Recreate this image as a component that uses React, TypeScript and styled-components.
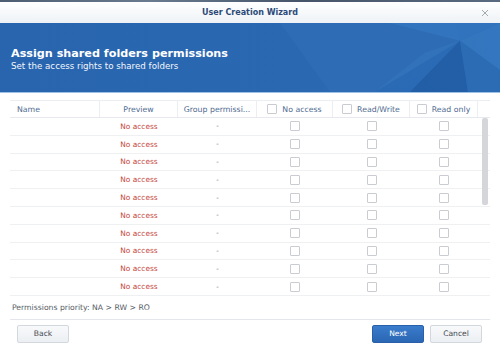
import { createGlobalStyle, styled } from "styled-components";

const GlobalStyle = createGlobalStyle`
  html, body {
    margin: 0;
    padding: 0;
    background: #ffffff;
  }
  body {
    font-family: "DejaVu Sans", "Liberation Sans", sans-serif;
  }
  * {
    box-sizing: border-box;
  }
`;

const ROWS = 10;
const COLUMNS = "90px 78px 79px 76px 77px 68px 12px";

const App = () => {
  return (
    <Window>
      <GlobalStyle />
      <TopStrip />
      <TitleBar>
        <span />
        <Title>User Creation Wizard</Title>
        <Close aria-label="close">
          <svg width="8" height="8" viewBox="0 0 8 8">
            <path d="M1 1 L7 7 M7 1 L1 7" stroke="#a3a9b0" strokeWidth="1" />
          </svg>
        </Close>
      </TitleBar>
      <Banner>
        <Facets viewBox="0 0 500 70" preserveAspectRatio="none">
          <polygon points="280,0 455,0 460,18 375,70 330,70" fill="#3270b8" opacity="0.45" />
          <polygon points="390,0 500,0 460,18" fill="#3577c0" opacity="0.7" />
          <polygon points="460,18 500,0 500,48" fill="#3a7dc5" opacity="0.6" />
          <polygon points="460,18 410,70 468,70" fill="#1f5aa0" opacity="0.7" />
          <polygon points="460,18 468,70 500,70 500,48" fill="#2c6cb5" />
          <polygon points="425,30 460,18 375,70" fill="#3a7cc4" opacity="0.35" />
        </Facets>
        <BannerTitle>Assign shared folders permissions</BannerTitle>
        <BannerSubtitle>Set the access rights to shared folders</BannerSubtitle>
      </Banner>

      <Content>
        <Table>
          <HeaderRow>
            <HeaderCell $align="left">Name</HeaderCell>
            <HeaderCell>Preview</HeaderCell>
            <HeaderCell>Group permissi...</HeaderCell>
            <HeaderCell>
              <Box />
              No access
            </HeaderCell>
            <HeaderCell>
              <Box />
              Read/Write
            </HeaderCell>
            <HeaderCell>
              <Box />
              Read only
            </HeaderCell>
            <HeaderCell $last />
          </HeaderRow>
          <Body>
            {Array.from({ length: ROWS }).map((_, i) => (
              <Row key={i}>
                <Cell />
                <Cell>
                  <Denied>No access</Denied>
                </Cell>
                <Cell>
                  <Dash>-</Dash>
                </Cell>
                <Cell>
                  <Box />
                </Cell>
                <Cell>
                  <Box />
                </Cell>
                <Cell>
                  <Box />
                </Cell>
                <Cell />
              </Row>
            ))}
            <Thumb />
          </Body>
        </Table>
        <Priority>Permissions priority: NA &gt; RW &gt; RO</Priority>
      </Content>

      <Footer>
        <Button>Back</Button>
        <Spacer />
        <Button $primary>Next</Button>
        <Button>Cancel</Button>
      </Footer>
    </Window>
  );
};

export default App;

const Window = styled.div`
  width: 500px;
  height: 346px;
  display: flex;
  flex-direction: column;
  background: #ffffff;
  overflow: hidden;
`;
const TopStrip = styled.div`
  height: 2px;
  background: linear-gradient(90deg, #4d5d72, #6a7b90 30%, #465569 60%, #5a6a80);
`;
const TitleBar = styled.div`
  height: 21px;
  display: grid;
  grid-template-columns: 1fr auto 1fr;
  align-items: center;
  background: linear-gradient(#ffffff, #eef2f6);
`;
const Title = styled.div`
  font-size: 8px;
  font-weight: bold;
  color: #2c4a78;
`;
const Close = styled.div`
  justify-self: end;
  margin-right: 11px;
  display: flex;
  align-items: center;
`;
const Banner = styled.div`
  position: relative;
  height: 70px;
  padding: 2px 11px 0;
  display: flex;
  flex-direction: column;
  justify-content: center;
  background: linear-gradient(90deg, #2965af, #2a68b2 60%, #2b6cb6);
  border-bottom: 1px solid #9dc0e4;
  overflow: hidden;
`;
const Facets = styled.svg`
  position: absolute;
  inset: 0;
  width: 100%;
  height: 100%;
`;
const BannerTitle = styled.div`
  position: relative;
  font-size: 11.2px;
  font-weight: bold;
  color: #ffffff;
  line-height: 15px;
`;
const BannerSubtitle = styled.div`
  position: relative;
  font-size: 8.7px;
  color: #f2f6fb;
  line-height: 11px;
`;
const Content = styled.div`
  padding: 7px 10px 0;
  display: flex;
  flex-direction: column;
`;
const Table = styled.div`
  display: flex;
  flex-direction: column;
`;
const HeaderRow = styled.div`
  display: grid;
  grid-template-columns: ${COLUMNS};
  height: 18px;
  border-top: 1px solid #eceff2;
  border-bottom: 1px solid #e6e9ed;
`;
const HeaderCell = styled.div<{ $align?: "left"; $last?: boolean }>`
  display: flex;
  align-items: center;
  justify-content: ${p => (p.$align === "left" ? "flex-start" : "center")};
  gap: 5px;
  padding-left: ${p => (p.$align === "left" ? "7px" : "0")};
  border-right: ${p => (p.$last ? "none" : "1px solid #eceff2")};
  font-size: 7.8px;
  color: #4f6b90;
  white-space: nowrap;
  overflow: hidden;
`;
const Body = styled.div`
  position: relative;
  display: flex;
  flex-direction: column;
`;
const Row = styled.div`
  display: grid;
  grid-template-columns: ${COLUMNS};
  height: 17.8px;
  border-bottom: 1px solid #eef0f2;
`;
const Cell = styled.div`
  display: flex;
  align-items: center;
  justify-content: center;
`;
const Denied = styled.span`
  font-size: 7.4px;
  color: #c4443a;
`;
const Dash = styled.span`
  font-size: 7px;
  color: #777;
`;
const Box = styled.span`
  display: inline-block;
  width: 10px;
  height: 10px;
  border: 1px solid #c9cdd2;
  border-radius: 1px;
  background: #ffffff;
  flex: none;
`;
const Thumb = styled.div`
  position: absolute;
  top: 0;
  right: 2px;
  width: 6px;
  height: 87px;
  border-radius: 2px;
  background: #d4d6d9;
`;
const Priority = styled.div`
  height: 24px;
  display: flex;
  align-items: center;
  padding-left: 2px;
  font-size: 7.7px;
  color: #555d66;
  border-bottom: 1px solid #e3e6ea;
`;
const Footer = styled.div`
  display: flex;
  align-items: center;
  gap: 6px;
  padding: 5px 18px 0 17px;
`;
const Spacer = styled.div`
  flex: 1;
`;
const Button = styled.div<{ $primary?: boolean }>`
  width: 52px;
  height: 18px;
  display: flex;
  align-items: center;
  justify-content: center;
  border-radius: 2px;
  font-size: 7.6px;
  color: ${p => (p.$primary ? "#ffffff" : "#3f4850")};
  background: ${p =>
    p.$primary ? "linear-gradient(#3a7ccc, #2a66b3)" : "linear-gradient(#f8f9fb, #eceff3)"};
  border: 1px solid ${p => (p.$primary ? "#2a60a8" : "#d3d8de")};
`;
